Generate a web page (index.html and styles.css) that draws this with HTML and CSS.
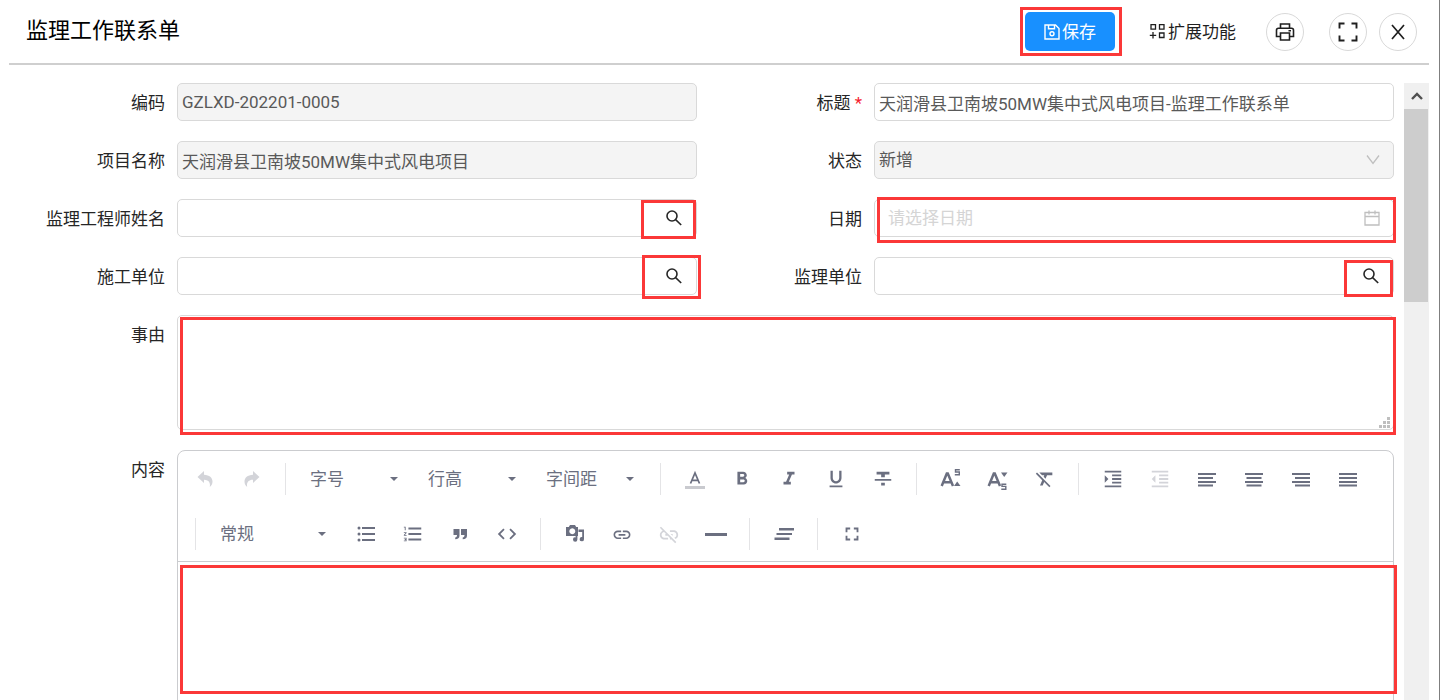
FILE: index.html
```html
<!DOCTYPE html>
<html lang="zh-CN">
<head>
<meta charset="utf-8">
<title>监理工作联系单</title>
<link rel="stylesheet" href="styles.css">
</head>
<body>
<div class="page">
  <header class="header">
    <h1 class="title">监理工作联系单</h1>
    <div class="actions">
      <div class="save-wrap">
        <button class="save" type="button">
          <svg width="16" height="16" viewBox="0 0 16 16" fill="none" stroke="currentColor" stroke-width="1.4"><path d="M1 1h10.500L15 4.500V15H1z"/><path d="M4.500 1v3.800h6V1"/><circle cx="8" cy="9.800" r="2"/></svg>
          <span>保存</span>
        </button>
        <span class="mark mark-save"></span>
      </div>
      <button class="more" type="button">
        <svg width="17" height="17" viewBox="0 0 17 17" fill="none" stroke="currentColor" stroke-width="1.300"><path d="M2 1.700h4.500v4.500H2zM10.500 1.700H15v4.500h-4.500zM10.500 10H15v4.500h-4.500zM4 9v6.500M.8 12.300h6.400"/></svg>
        <span>扩展功能</span>
      </button>
      <button class="round round-print" type="button" aria-label="打印">
        <svg width="20" height="20" viewBox="0 0 20 20" fill="none" stroke="currentColor" stroke-width="1.600"><path d="M5.500 6V2h9v4M5.500 14.500H1.500V8.300q0-2 2-2h13q2 0 2 2v6.200h-4M5.500 11h9v7h-9zM13.500 8.800h2.500"/></svg>
      </button>
      <button class="round" type="button" aria-label="全屏">
        <svg width="20" height="20" viewBox="0 0 20 20" fill="none" stroke="currentColor" stroke-width="1.900"><path d="M1.500 6.500V1.500H6.500M13.500 1.500h5V6.500M18.500 13.500v5H13.500M6.500 18.500H1.500V13.500"/></svg>
      </button>
      <button class="round" type="button" aria-label="关闭">
        <svg width="16" height="16" viewBox="0 0 16 16" fill="none" stroke="currentColor" stroke-width="1.700"><path d="M2 1l12 14M14 1L2 15"/></svg>
      </button>
    </div>
  </header>

  <main class="body">
    <form class="form">
      <div class="item">
        <label class="label" for="code">编码</label>
        <div class="field"><input class="control readonly" id="code" type="text" value="GZLXD-202201-0005" readonly></div>
      </div>
      <div class="item">
        <label class="label" for="subject">标题 <span class="required">*</span></label>
        <div class="field"><input class="control" id="subject" type="text" value="天润滑县卫南坡50MW集中式风电项目-监理工作联系单"></div>
      </div>
      <div class="item">
        <label class="label" for="project">项目名称</label>
        <div class="field"><input class="control readonly" id="project" type="text" value="天润滑县卫南坡50MW集中式风电项目" readonly></div>
      </div>
      <div class="item">
        <label class="label" for="status">状态</label>
        <div class="field">
          <select class="control readonly" id="status" disabled><option>新增</option></select>
          <svg class="suffix muted" width="14" height="14" viewBox="0 0 14 14" fill="none" stroke="currentColor" stroke-width="1.300"><path d="M1 2.500l6 8 6-8"/></svg>
        </div>
      </div>
      <div class="item">
        <label class="label" for="engineer">监理工程师姓名</label>
        <div class="field">
          <input class="control" id="engineer" type="text">
          <button class="search" type="button" aria-label="选择监理工程师"><svg width="16" height="16" viewBox="0 0 16 16" fill="none" stroke="currentColor" stroke-width="1.600"><circle cx="6" cy="6" r="5"/><path d="M9.600 9.600l5.600 5.400"/></svg></button>
          <span class="mark mark-engineer"></span>
        </div>
      </div>
      <div class="item">
        <label class="label" for="date">日期</label>
        <div class="field">
          <input class="control date" id="date" type="text" placeholder="请选择日期">
          <svg class="suffix muted" width="16" height="16" viewBox="0 0 16 16" fill="none" stroke="currentColor" stroke-width="1.300"><path d="M1 2.500h14V15H1zM1 6.500h14M5 .5v4M11 .5v4"/></svg>
          <span class="mark mark-date"></span>
        </div>
      </div>
      <div class="item">
        <label class="label" for="builder">施工单位</label>
        <div class="field">
          <input class="control" id="builder" type="text">
          <button class="search" type="button" aria-label="选择施工单位"><svg width="16" height="16" viewBox="0 0 16 16" fill="none" stroke="currentColor" stroke-width="1.600"><circle cx="6" cy="6" r="5"/><path d="M9.600 9.600l5.600 5.400"/></svg></button>
          <span class="mark mark-builder"></span>
        </div>
      </div>
      <div class="item">
        <label class="label" for="supervisor">监理单位</label>
        <div class="field">
          <input class="control" id="supervisor" type="text">
          <button class="search" type="button" aria-label="选择监理单位"><svg width="16" height="16" viewBox="0 0 16 16" fill="none" stroke="currentColor" stroke-width="1.600"><circle cx="6" cy="6" r="5"/><path d="M9.600 9.600l5.600 5.400"/></svg></button>
          <span class="mark mark-supervisor"></span>
        </div>
      </div>
      <div class="item wide">
        <label class="label" for="reason">事由</label>
        <div class="field">
          <textarea class="control reason" id="reason"></textarea>
          <svg class="grip" width="11" height="11" viewBox="0 0 11 11" fill="currentColor"><path d="M8 0h3v3H8zM4 4h3v3H4zM8 4h3v3H8zM0 8h3v3H0zM4 8h3v3H4zM8 8h3v3H8z"/></svg>
          <span class="mark mark-reason"></span>
        </div>
      </div>
      <div class="item wide">
        <label class="label" for="content">内容</label>
        <div class="field editor">
          <div class="toolbar">
            <div class="tools">
              <button class="tool off" type="button" aria-label="撤销"><svg viewBox="0 0 22 22"><path d="M3.500 9L10 3v3.800c5.500.2 8.500 3.200 8.500 6.700 0 2-.8 4-2.700 5.500.8-3.500-.5-7.200-5.800-7.200V15z"/></svg></button>
              <button class="tool off" type="button" aria-label="重做"><svg viewBox="0 0 22 22"><path d="M18.500 9L12 3v3.800c-5.500.2-8.500 3.200-8.500 6.700 0 2 .8 4 2.700 5.500-.8-3.500.5-7.200 5.800-7.200V15z"/></svg></button>
              <span class="sep"></span>
              <div class="pick"><select aria-label="字号"><option>字号</option></select></div>
              <div class="pick"><select aria-label="行高"><option>行高</option></select></div>
              <div class="pick"><select aria-label="字间距"><option>字间距</option></select></div>
              <span class="sep"></span>
              <button class="tool" type="button" aria-label="颜色"><svg viewBox="0 0 22 22"><path d="M6.500 15.500L11 5l4.500 10.500M8 12.300h6" fill="none" stroke="currentColor" stroke-width="1.700"/><path d="M1 18h20v3H1z" fill="#c9cacf"/></svg></button>
              <button class="tool" type="button" aria-label="粗体"><svg viewBox="0 0 24 24"><path d="M15.600 10.790c.97-.67 1.650-1.770 1.650-2.790 0-2.260-1.750-4-4-4H7v14h7.040c2.090 0 3.710-1.700 3.710-3.790 0-1.520-.86-2.820-2.150-3.420zM10 6.500h3c.83 0 1.500.67 1.500 1.500s-.67 1.500-1.500 1.500h-3v-3zm3.500 9H10v-3h3.500c.83 0 1.500.67 1.500 1.500s-.67 1.500-1.500 1.500z"/></svg></button>
              <button class="tool" type="button" aria-label="斜体"><svg viewBox="0 0 24 24"><path d="M10 4v3h2.210l-3.420 8H6v3h8v-3h-2.210l3.420-8H18V4z"/></svg></button>
              <button class="tool" type="button" aria-label="下划线"><svg viewBox="0 0 24 24"><path d="M12 17c3.310 0 6-2.690 6-6V3h-2.500v8c0 1.930-1.570 3.500-3.500 3.500S8.500 12.930 8.500 11V3H6v8c0 3.310 2.690 6 6 6zm-7 2v2h14v-2H5z"/></svg></button>
              <button class="tool" type="button" aria-label="删除线"><svg viewBox="0 0 24 24"><path d="M10 19h4v-3h-4v3zM5 4v3h5v3h4V7h5V4H5zM3 14h18v-2H3v2z"/></svg></button>
              <span class="sep"></span>
              <button class="tool" type="button" aria-label="上标"><svg viewBox="0 0 22 22"><path d="M1.700 18L6.800 5.500h1L13 18M4 14.300h7" fill="none" stroke="currentColor" stroke-width="2.500"/><path d="M14 18l3.200-4.500 3.300 4.500z"/><path d="M19.800 1.700h-4.300V4h3.800v2.700h-4.500" fill="none" stroke="currentColor" stroke-width="1.400"/></svg></button>
              <button class="tool" type="button" aria-label="下标"><svg viewBox="0 0 22 22"><path d="M1.700 18L6.800 5.500h1L13 18M4 14.300h7" fill="none" stroke="currentColor" stroke-width="2.500"/><path d="M14 4.500h6.500L17.200 9z"/><path d="M19.300 16.200H15v2.200h3.800v2.800h-4.500" fill="none" stroke="currentColor" stroke-width="1.400"/></svg></button>
              <button class="tool" type="button" aria-label="清除格式"><svg viewBox="0 0 24 24"><path d="M3.270 5L2 6.270l6.970 6.970L6.500 19h3l1.570-3.660L16.730 21 18 19.730 3.550 5.270 3.270 5zM6 5v.18L8.820 8h2.400l-.72 1.680 2.100 2.100L14.210 8H20V5H6z"/></svg></button>
              <span class="sep"></span>
              <button class="tool" type="button" aria-label="增加缩进"><svg viewBox="0 0 24 24"><path d="M3 21h18v-2H3v2zM3 8v8l4-4-4-4zm8 9h10v-2H11v2zM3 3v2h18V3H3zm8 6h10V7H11v2zm0 4h10v-2H11v2z"/></svg></button>
              <button class="tool off" type="button" aria-label="减少缩进"><svg viewBox="0 0 24 24"><path d="M11 17h10v-2H11v2zm-8-5l4 4V8l-4 4zm0 9h18v-2H3v2zM3 3v2h18V3H3zm8 6h10V7H11v2zm0 4h10v-2H11v2z"/></svg></button>
              <button class="tool" type="button" aria-label="左对齐"><svg viewBox="0 0 22 22"><path d="M2 5h18v2H2zM2 9h15v2H2zM2 13h18v2H2zM2 16.500h15v2H2z"/></svg></button>
              <button class="tool" type="button" aria-label="居中"><svg viewBox="0 0 22 22"><path d="M2 5h18v2H2zM3.500 9h15v2h-15zM2 13h18v2H2zM3.500 16.500h15v2h-15z"/></svg></button>
              <button class="tool" type="button" aria-label="右对齐"><svg viewBox="0 0 22 22"><path d="M2 5h18v2H2zM5 9h15v2H5zM2 13h18v2H2zM5 16.500h15v2H5z"/></svg></button>
              <button class="tool" type="button" aria-label="两端对齐"><svg viewBox="0 0 22 22"><path d="M2 5h18v2H2zM2 9h18v2H2zM2 13h18v2H2zM2 16.500h18v2H2z"/></svg></button>
            </div>
            <div class="tools second">
              <span class="sep"></span>
              <div class="pick style"><select aria-label="段落样式"><option>常规</option></select></div>
              <button class="tool" type="button" aria-label="无序列表"><svg viewBox="0 0 22 22"><path d="M7 4h13v2H7zM7 10h13v2H7zM7 16h13v2H7z"/><circle cx="4" cy="5" r="1.500"/><circle cx="4" cy="11" r="1.500"/><circle cx="4" cy="17" r="1.500"/></svg></button>
              <button class="tool" type="button" aria-label="有序列表"><svg viewBox="0 0 24 24"><path d="M2 17h2v.5H3v1h1v.5H2v1h3v-4H2v1zm1-9h1V4H2v1h1v3zm-1 3h1.800L2 13.100v.9h3v-1H3.200L5 10.900V10H2v1zm5-6v2h14V5H7zm0 14h14v-2H7v2zm0-6h14v-2H7v2z"/></svg></button>
              <button class="tool" type="button" aria-label="引用"><svg viewBox="0 0 22 22"><path d="M4.500 6h6v6.500c0 2.500-1.500 3.800-4.300 3.800v-1.800c1.300-.2 1.800-.9 1.800-2.500H4.500zM12 6h6v6.500c0 2.500-1.500 3.800-4.300 3.800v-1.800c1.300-.2 1.800-.9 1.800-2.500H12z"/></svg></button>
              <button class="tool" type="button" aria-label="代码"><svg viewBox="0 0 24 24"><path d="M9.400 16.600L4.800 12l4.600-4.600L8 6l-6 6 6 6 1.400-1.400zm5.200 0l4.600-4.600-4.600-4.600L16 6l6 6-6 6-1.400-1.400z"/></svg></button>
              <span class="sep"></span>
              <button class="tool" type="button" aria-label="媒体"><svg viewBox="0 0 22 22"><path fill-rule="evenodd" d="M2 4h2.800L6 2h5l1.200 2H14v9H2zM8.300 5.300a3 3 0 1 0 .01 0z"/><path d="M14.500 6.500H20v9.700a2.200 2.200 0 1 1-1.800-2.200V9h-3.700zM9 16.600a2.200 2.200 0 0 1 2.600-2.200V11h1.800v5.600a2.200 2.200 0 0 1-4.400 0z"/></svg></button>
              <button class="tool" type="button" aria-label="链接"><svg viewBox="-1 -2 26 26"><path d="M3.900 12c0-1.710 1.390-3.100 3.100-3.100h4V7H7c-2.760 0-5 2.240-5 5s2.240 5 5 5h4v-1.900H7c-1.710 0-3.100-1.390-3.100-3.100zM8 13h8v-2H8v2zm9-6h-4v1.900h4c1.710 0 3.100 1.390 3.100 3.100s-1.390 3.100-3.100 3.100h-4V17h4c2.760 0 5-2.240 5-5s-2.240-5-5-5z"/></svg></button>
              <button class="tool off" type="button" aria-label="取消链接"><svg viewBox="0 -1 24 24"><path d="M17 7h-4v1.900h4c1.710 0 3.100 1.390 3.100 3.100 0 1.430-.98 2.630-2.310 2.980l1.460 1.460C20.880 15.610 22 13.950 22 12c0-2.760-2.240-5-5-5zm-1 4h-2.190l2 2H16v-2zM2 4.270l3.110 3.110C3.290 8.120 2 9.910 2 12c0 2.760 2.240 5 5 5h4v-1.900H7c-1.710 0-3.100-1.390-3.100-3.100 0-1.590 1.210-2.900 2.760-3.070L8.730 11H8v2h2.730L13 15.270V17h1.730l4.010 4L20 19.740 3.270 3 2 4.270z"/></svg></button>
              <button class="tool" type="button" aria-label="分割线"><svg viewBox="0 0 22 22"><path d="M0 10h22v3H0z"/></svg></button>
              <span class="sep"></span>
              <button class="tool" type="button" aria-label="首行缩进"><svg viewBox="0 0 22 22"><path d="M6 5h15v2.500H6zM3.500 10h15.500v2H3.500zM1.500 14.500h15V17h-15z"/></svg></button>
              <span class="sep"></span>
              <button class="tool" type="button" aria-label="编辑器全屏"><svg viewBox="0 0 24 24"><path d="M7 14H5v5h5v-2H7v-3zm-2-4h2V7h3V5H5v5zm12 7h-3v2h5v-5h-2v3zM14 5v2h3v3h2V5h-5z"/></svg></button>
            </div>
          </div>
          <div class="canvas">
            <textarea class="content" id="content"></textarea>
            <span class="mark mark-content"></span>
          </div>
        </div>
      </div>
    </form>
    <div class="scroll">
      <button class="scroll-up" type="button" aria-label="向上滚动"><svg width="12" height="8" viewBox="0 0 12 8" fill="none" stroke="currentColor" stroke-width="2.400"><path d="M1 7l5-5 5 5"/></svg></button>
      <div class="thumb"></div>
    </div>
  </main>
</div>
</body>
</html>
```
FILE: styles.css
```css
* { box-sizing: border-box; }

body {
  margin: 0;
  background: #fff;
  color: #262626;
  font: 17px/24px Roboto, "Noto Sans CJK SC", sans-serif;
}

button, input, select, textarea { font: inherit; color: inherit; margin: 0; }
button { display: flex; align-items: center; justify-content: center; padding: 0; border: 0; background: none; cursor: pointer; }
svg { display: block; flex: none; }

.page {
  display: flex;
  flex-direction: column;
  height: 100vh;
  overflow: hidden;
  border-right: 1px solid #7f7f7f;
}

.header {
  display: flex;
  align-items: center;
  justify-content: space-between;
  flex: none;
  height: 65px;
  margin: 0 10px 0 9px;
  padding: 0 12px 0 17px;
  border-bottom: 2px solid #cfcfcf;
}
.title { margin: 0; padding-bottom: 2px; font-size: 22px; line-height: 32px; font-weight: 400; color: #000; }
.actions { display: flex; align-items: center; gap: 12px; }
.save-wrap { position: relative; margin-right: 22px; }
.save { gap: 2px; width: 90px; height: 39px; border-radius: 5px; background: #1890ff; color: #fff; }
.more { gap: 2px; margin-right: 18px; color: #1f1f1f; }
.round { width: 38px; height: 38px; border: 1px solid #d9d9d9; border-radius: 50%; background: #fff; color: #1f1f1f; }
.round-print { margin-right: 13px; }

.body { display: flex; flex: 1; min-height: 0; padding-top: 18px; }
.form {
  display: grid;
  grid-template-columns: 1fr 1fr;
  align-content: start;
  gap: 20px 0;
  flex: 1;
  min-width: 0;
  margin-right: 10px;
}
.item { display: flex; min-width: 0; }
.wide { grid-column: 1 / -1; }
.label { flex: none; width: 177px; height: 38px; padding-right: 12px; line-height: 40px; text-align: right; white-space: nowrap; }
.required { color: #f5222d; }
.field { position: relative; flex: 1; min-width: 0; }
.control {
  display: block;
  width: 100%;
  height: 38px;
  padding: 0 4px;
  border: 1px solid #d9d9d9;
  border-radius: 5px;
  outline: 0;
  background: #fff;
  color: #595959;
  appearance: none;
}
.readonly { background: #f4f4f4; opacity: 1; }
.date { padding-left: 13px; }
.date::placeholder { color: #d5d5d5; }
.suffix { position: absolute; top: 0; bottom: 0; right: 14px; margin: auto 0; }
.muted { color: #bfbfbf; }
.search { position: absolute; top: 0; right: 0; width: 46px; height: 37px; color: #262626; }
.reason { height: 115px; resize: none; }
.grip { position: absolute; right: 4px; bottom: 2px; color: #bfbfbf; }

.mark { position: absolute; border: 3px solid #fb3838; pointer-events: none; }
.mark-save { inset: -5px -7px -5px -5px; }
.mark-engineer { top: 1px; right: 1px; width: 55px; height: 39px; }
.mark-date { inset: -2px -2px -6px 3px; }
.mark-builder { top: -2px; right: -4px; width: 59px; height: 44px; }
.mark-supervisor { top: 3px; right: 1px; width: 49px; height: 37px; }
.mark-reason { inset: 2px -2px -5px 3px; }
.mark-content { inset: 3px -4px auto 2px; height: 129px; }

.editor { border: 1px solid #cbcccf; border-radius: 8px; }
.toolbar { border-bottom: 1px solid #cbcccf; }
.tools { display: flex; align-items: center; height: 55px; padding: 0 3px; color: #6b6f80; }
.second { padding-left: 7px; }
.tool { flex: none; width: 47px; height: 40px; }
.tool svg { width: 22px; height: 22px; fill: currentColor; }
.off { color: #d3d4d9; }
.sep { flex: none; width: 1px; height: 32px; margin: 0 10px; background: #e4e4e6; }
.pick { position: relative; flex: none; width: 118px; }
.pick select { display: block; width: 100%; height: 40px; padding: 0 0 0 14px; border: 0; outline: 0; background: none; appearance: none; }
.pick::after {
  content: "";
  position: absolute;
  top: 18px;
  right: 16px;
  border: 4px solid transparent;
  border-top-color: currentColor;
  border-bottom: 0;
}
.style { width: 136px; }
.canvas { position: relative; }
.content { display: block; width: 100%; height: 240px; padding: 12px; border: 0; outline: 0; background: none; resize: none; }

.scroll { flex: none; width: 25px; margin-right: 10px; background: #f0f0f0; }
.scroll-up { width: 100%; height: 26px; color: #505050; }
.thumb { height: 193px; margin-right: 1px; background: #cdcdcd; }
```
